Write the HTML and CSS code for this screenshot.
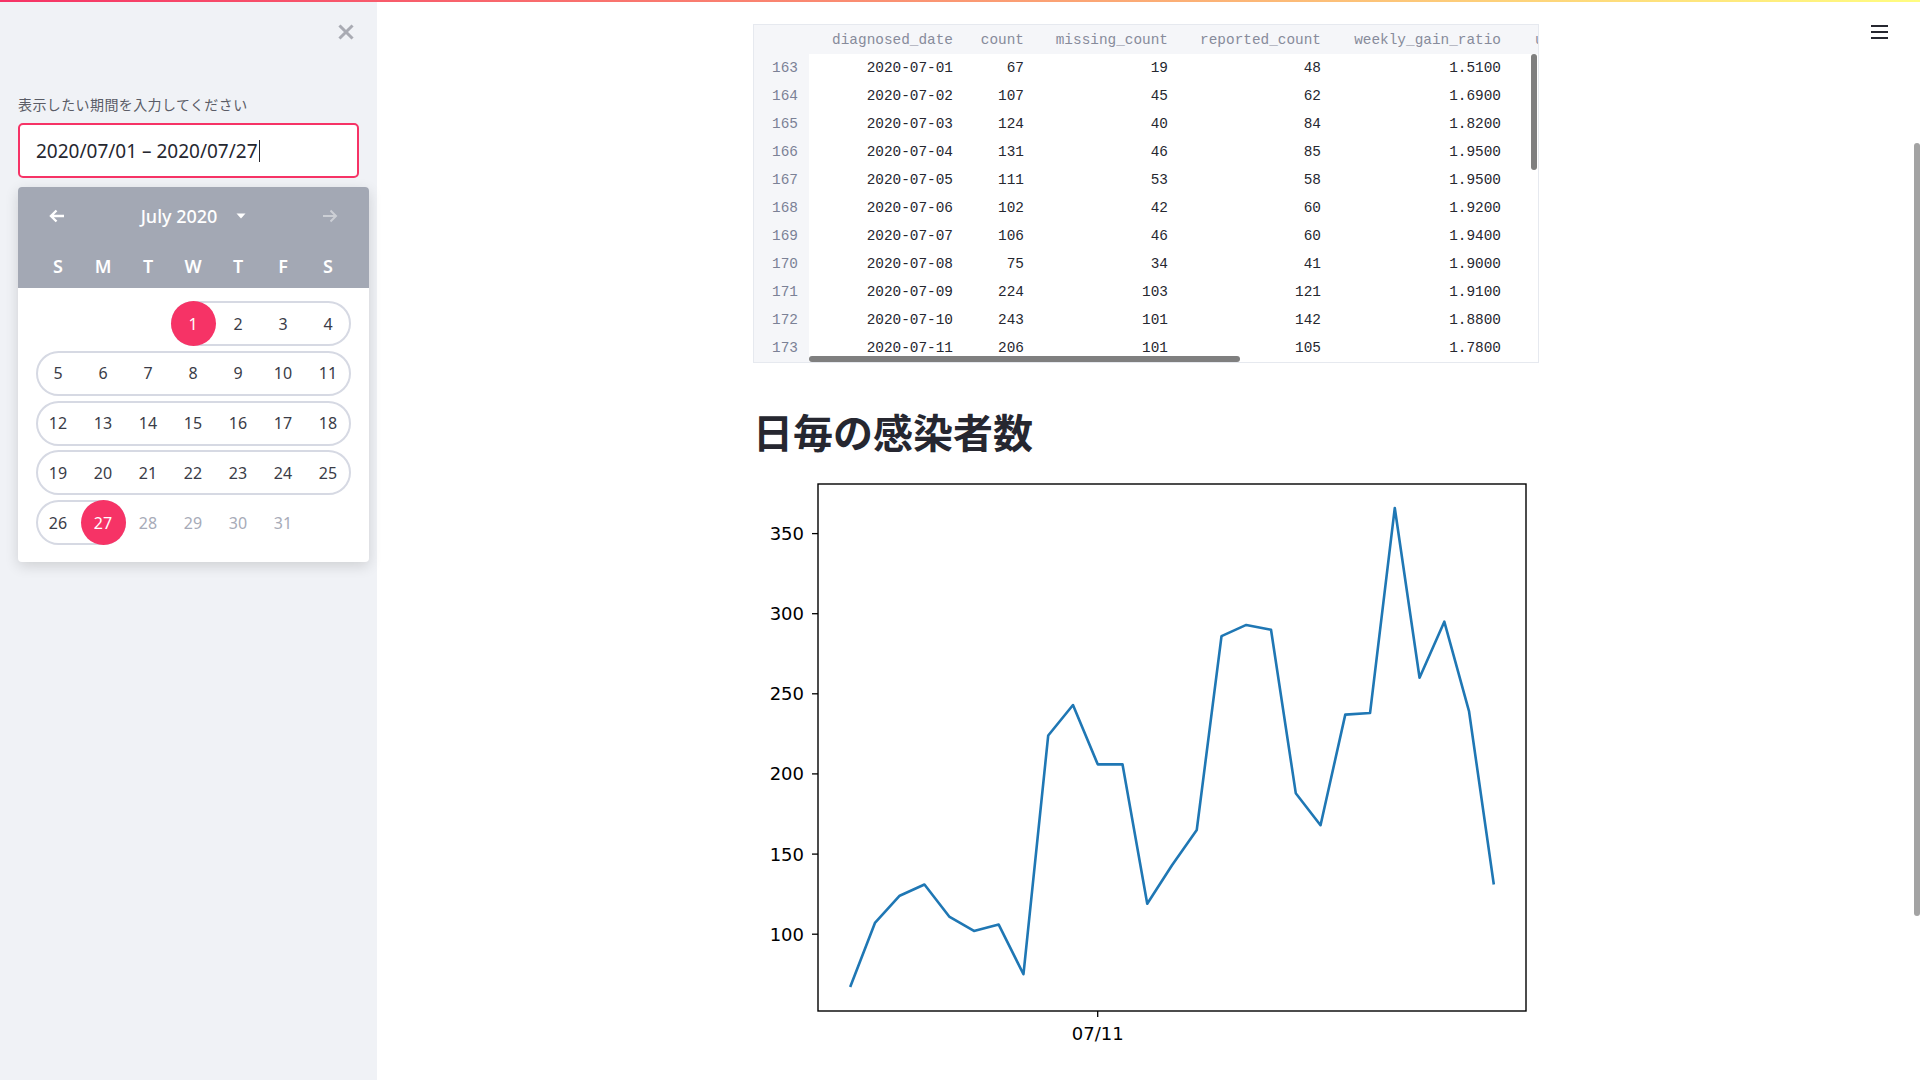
FILE: index.html
```html
<!DOCTYPE html>
<html lang="ja">
<head>
<meta charset="utf-8">
<title>日毎の感染者数</title>
<link rel="stylesheet" href="styles.css">
</head>
<body>
<div class="decoration"></div>
<div class="app">
  <aside class="sidebar">
    <div class="close-row">
      <svg class="close-icon" width="16" height="16" viewBox="0 0 16 16"><path d="M2.5 2.5 L13.5 13.5 M13.5 2.5 L2.5 13.5" stroke="#a9abb3" stroke-width="3" stroke-linecap="square"/></svg>
    </div>
    <div class="label">表示したい期間を入力してください</div>
    <div class="date-input"><span>2020/07/01 – 2020/07/27</span><span class="caret"></span></div>
    <div class="calendar">
      <div class="cal-head">
        <div class="cal-nav">
          <span class="nav-btn"><svg width="16" height="14" viewBox="0 0 16 14"><path d="M15 7 H2 M7.5 1.5 L2 7 L7.5 12.5" fill="none" stroke="#ffffff" stroke-width="2.4"/></svg></span>
          <span class="month"><span>July 2020</span><svg class="month-caret" width="10" height="6" viewBox="0 0 10 6"><path d="M0.5 0.5 H9.5 L5 5.5 Z" fill="#ffffff"/></svg></span>
          <span class="nav-btn nav-off"><svg width="16" height="14" viewBox="0 0 16 14"><path d="M1 7 H14 M8.5 1.5 L14 7 L8.5 12.5" fill="none" stroke="#ffffff" stroke-width="2"/></svg></span>
        </div>
        <div class="weekdays">
          <span>S</span><span>M</span><span>T</span><span>W</span><span>T</span><span>F</span><span>S</span>
        </div>
      </div>
      <div class="cal-body">
        <div class="week">
          <span class="pill c4-8"></span>
          <span class="day sel c4">1</span><span class="day c5">2</span><span class="day c6">3</span><span class="day c7">4</span>
        </div>
        <div class="week">
          <span class="pill c1-8"></span>
          <span class="day c1">5</span><span class="day c2">6</span><span class="day c3">7</span><span class="day c4">8</span><span class="day c5">9</span><span class="day c6">10</span><span class="day c7">11</span>
        </div>
        <div class="week">
          <span class="pill c1-8"></span>
          <span class="day c1">12</span><span class="day c2">13</span><span class="day c3">14</span><span class="day c4">15</span><span class="day c5">16</span><span class="day c6">17</span><span class="day c7">18</span>
        </div>
        <div class="week">
          <span class="pill c1-8"></span>
          <span class="day c1">19</span><span class="day c2">20</span><span class="day c3">21</span><span class="day c4">22</span><span class="day c5">23</span><span class="day c6">24</span><span class="day c7">25</span>
        </div>
        <div class="week">
          <span class="pill c1-3"></span>
          <span class="day c1">26</span><span class="day sel c2">27</span><span class="day off c3">28</span><span class="day off c4">29</span><span class="day off c5">30</span><span class="day off c6">31</span>
        </div>
      </div>
    </div>
  </aside>

  <main class="main">
    <div class="menu"><span></span><span></span><span></span></div>

    <div class="df">
      <table class="df-table">
        <colgroup>
          <col class="w-idx"><col class="w-date"><col class="w-count"><col class="w-miss"><col class="w-rep"><col class="w-ratio"><col class="w-next">
        </colgroup>
        <thead>
          <tr><th class="idx"></th><th>diagnosed_date</th><th>count</th><th>missing_count</th><th>reported_count</th><th>weekly_gain_ratio</th><th class="next">u</th></tr>
        </thead>
        <tbody>
          <tr><td class="idx">163</td><td>2020-07-01</td><td>67</td><td>19</td><td>48</td><td>1.5100</td><td></td></tr>
          <tr><td class="idx">164</td><td>2020-07-02</td><td>107</td><td>45</td><td>62</td><td>1.6900</td><td></td></tr>
          <tr><td class="idx">165</td><td>2020-07-03</td><td>124</td><td>40</td><td>84</td><td>1.8200</td><td></td></tr>
          <tr><td class="idx">166</td><td>2020-07-04</td><td>131</td><td>46</td><td>85</td><td>1.9500</td><td></td></tr>
          <tr><td class="idx">167</td><td>2020-07-05</td><td>111</td><td>53</td><td>58</td><td>1.9500</td><td></td></tr>
          <tr><td class="idx">168</td><td>2020-07-06</td><td>102</td><td>42</td><td>60</td><td>1.9200</td><td></td></tr>
          <tr><td class="idx">169</td><td>2020-07-07</td><td>106</td><td>46</td><td>60</td><td>1.9400</td><td></td></tr>
          <tr><td class="idx">170</td><td>2020-07-08</td><td>75</td><td>34</td><td>41</td><td>1.9000</td><td></td></tr>
          <tr><td class="idx">171</td><td>2020-07-09</td><td>224</td><td>103</td><td>121</td><td>1.9100</td><td></td></tr>
          <tr><td class="idx">172</td><td>2020-07-10</td><td>243</td><td>101</td><td>142</td><td>1.8800</td><td></td></tr>
          <tr><td class="idx">173</td><td>2020-07-11</td><td>206</td><td>101</td><td>105</td><td>1.7800</td><td></td></tr>
        </tbody>
      </table>
      <div class="vscroll"></div>
      <div class="hscroll"></div>
    </div>

    <h2 class="title">日毎の感染者数</h2>

    <svg class="chart" width="786" height="600" viewBox="0 0 786 600">
      <g class="ticks" stroke="#000" stroke-width="1.3">
        <line x1="59" y1="464.2" x2="65" y2="464.2"/>
        <line x1="59" y1="384.1" x2="65" y2="384.1"/>
        <line x1="59" y1="303.9" x2="65" y2="303.9"/>
        <line x1="59" y1="223.8" x2="65" y2="223.8"/>
        <line x1="59" y1="143.7" x2="65" y2="143.7"/>
        <line x1="59" y1="63.6" x2="65" y2="63.6"/>
        <line x1="344.7" y1="541" x2="344.7" y2="547"/>
      </g>
      <g class="ylabels" font-family="DejaVu Sans, sans-serif" font-size="18" fill="#000" text-anchor="end">
        <text x="51" y="470.7">100</text>
        <text x="51" y="390.6">150</text>
        <text x="51" y="310.4">200</text>
        <text x="51" y="230.3">250</text>
        <text x="51" y="150.2">300</text>
        <text x="51" y="70.1">350</text>
      </g>
      <text x="344.7" y="570" font-family="DejaVu Sans, sans-serif" font-size="18" fill="#000" text-anchor="middle">07/11</text>
      <polyline fill="none" stroke="#1f77b4" stroke-width="2.6" stroke-linejoin="round" points="97.18,517.05 121.94,452.95 146.69,425.72 171.45,414.5 196.2,446.55 220.96,460.97 245.71,454.56 270.47,504.23 295.22,265.48 319.98,235.04 344.73,294.33 369.49,294.33 394.24,433.73 419.0,395.27 443.75,360.02 468.51,166.14 493.26,154.93 518.02,159.73 542.77,323.17 567.53,355.21 592.28,244.65 617.04,243.05 641.79,37.96 666.55,207.8 691.3,151.72 716.06,241.45 740.81,414.5"/>
      <rect x="65" y="14" width="708" height="527" fill="none" stroke="#000" stroke-width="1.4"/>
    </svg>
  </main>
</div>
<div class="page-scroll"></div>
</body>
</html>
```
FILE: styles.css
```css
* { box-sizing: border-box; }
html, body { margin: 0; height: 100%; overflow: hidden; }
body {
  font-family: "Noto Sans", "Noto Sans CJK JP", sans-serif;
  color: #262730;
  background: #ffffff;
}
.decoration {
  position: fixed; top: 0; left: 0; right: 0; height: 2px;
  background: linear-gradient(90deg, #f63366, #fffd80);
  z-index: 10;
}
.app { display: flex; height: 100vh; }

/* Sidebar */
.sidebar {
  width: 377px; flex: none; background: #f0f2f6;
  padding: 0 18px 0 18px;
}
.close-row {
  height: 64px; display: flex; justify-content: flex-end; align-items: center;
  padding-right: 5px;
}
.label {
  margin-top: 30px; font-size: 14px; line-height: 20px; letter-spacing: 0.4px;
  color: #5a5c66;
  font-family: "Noto Sans CJK JP", sans-serif;
}
.date-input {
  margin-top: 9px; height: 55px; border: 2px solid #f63366; border-radius: 5px;
  background: #fff; display: flex; align-items: center; padding-left: 16px;
  font-size: 19px; color: #262730;
}
.caret { width: 1px; height: 22px; background: #262730; margin-left: 1px; }

.calendar {
  margin-top: 9px; width: 351px; background: #fff; border-radius: 4px;
  box-shadow: 0 4px 14px rgba(0, 0, 0, 0.14); overflow: hidden;
}
.cal-head { background: #a3a8b4; height: 101px; padding: 0 17.5px; }
.cal-nav {
  height: 57px; display: flex; align-items: center; justify-content: space-between;
  padding: 0 9px;
}
.nav-btn { width: 24px; display: flex; justify-content: center; }
.nav-off { opacity: 0.45; }
.month { display: flex; align-items: center; font-size: 18px; color: #fff; font-weight: 500; }
.month-caret { margin-left: 19px; }
.weekdays {
  height: 44px; display: grid; grid-template-columns: repeat(7, 45px);
  align-items: center; text-align: center;
  font-size: 18px; font-weight: 600; color: #fff;
}
.cal-body { padding: 13px 18.5px 17px 17.5px; display: flex; flex-direction: column; gap: 4.75px; }
.week { display: grid; grid-template-columns: repeat(7, 45px); grid-template-rows: 45px; }
.pill {
  grid-row: 1; border: 2px solid #d6d9e3; border-radius: 23px;
}
.c4-8 { grid-column: 4 / 8; }
.c1-8 { grid-column: 1 / 8; }
.c1-3 { grid-column: 1 / 3; }
.day {
  grid-row: 1; display: flex; align-items: center; justify-content: center;
  font-size: 16px; color: #3a3c47; position: relative;
}
.day.off { color: #a7abb8; }
.day.sel { background: #f63366; color: #fff; border-radius: 50%; }
.c1 { grid-column: 1; } .c2 { grid-column: 2; } .c3 { grid-column: 3; }
.c4 { grid-column: 4; } .c5 { grid-column: 5; } .c6 { grid-column: 6; } .c7 { grid-column: 7; }

/* Main */
.main { flex: 1; position: relative; padding: 24px 0 0 376px; overflow: hidden; }
.menu {
  position: absolute; top: 25px; right: 32px; width: 17px;
  display: flex; flex-direction: column; gap: 4px;
}
.menu span { display: block; height: 2px; background: #262730; }

.df {
  position: relative; width: 786px; height: 339px;
  border: 1px solid #e6e9ef; overflow: hidden; background: #fff;
}
.df-table {
  border-collapse: collapse; table-layout: fixed; width: 861px;
  font-family: "Liberation Mono", "DejaVu Sans Mono", monospace; font-size: 14.4px;
}
.w-idx { width: 55px; } .w-date { width: 158px; } .w-count { width: 71px; }
.w-miss { width: 144px; } .w-rep { width: 153px; } .w-ratio { width: 180px; } .w-next { width: 100px; }
.df-table th {
  height: 29px; padding: 0 14px 0 0; background: #f5f6f9; color: #878b9b;
  font-weight: normal; text-align: right; white-space: nowrap;
}
.df-table th.next { text-align: left; padding: 0 0 0 20px; }
.df-table td {
  height: 28px; padding: 0 14px 0 0; text-align: right; color: #262730; white-space: nowrap;
}
.df-table .idx { background: #f5f6f9; color: #7b8196; padding-right: 11px; }
.vscroll {
  position: absolute; right: 1px; top: 29px; width: 6px; height: 116px;
  background: #7f7f7f; border-radius: 3px;
}
.hscroll {
  position: absolute; left: 55px; bottom: 0; width: 431px; height: 6px;
  background: #7f7f7f; border-radius: 3px;
}

.title {
  margin: 40px 0 0; font-size: 40px; line-height: 56px; font-weight: 700;
  font-family: "Noto Sans CJK JP", sans-serif; color: #262730;
}
.chart { display: block; margin-top: 11px; }

.page-scroll {
  position: fixed; right: 0; top: 143px; width: 6px; height: 773px;
  background: #a3a3a3; border-radius: 3px;
}
```
